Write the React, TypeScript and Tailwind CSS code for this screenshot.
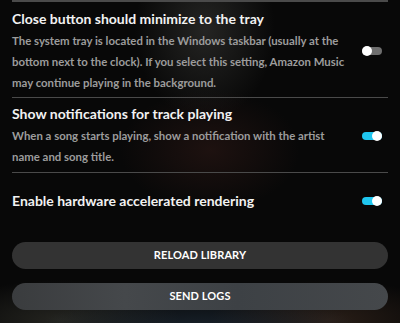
import React from "react";

function Toggle({ on }: { on: boolean }) {
  return (
    <div className="relative w-[20px] h-[10px] shrink-0">
      <div
        className={
          on
            ? "absolute left-0 right-0 top-[1px] h-[8px] rounded-full bg-[#1fc6ef]"
            : "absolute left-0 right-0 top-[1px] h-[8px] rounded-full bg-[#6e6e6e]"
        }
      />
      <div
        className={
          on
            ? "absolute right-0 top-0 w-[10px] h-[10px] rounded-full bg-white"
            : "absolute left-0 top-0 w-[10px] h-[10px] rounded-full bg-white"
        }
      />
    </div>
  );
}

function Row({ title, desc, on }: { title: string; desc?: string; on: boolean }) {
  return (
    <div className="flex items-center">
      <div className="flex-1">
        <div className="text-[14px] leading-[20px] font-bold text-[#f2f2f2]">{title}</div>
        {desc && (
          <div className="mt-[1px] text-[11.4px] leading-[21px] font-bold text-[#9c9c9c] w-[341px]">
            {desc}
          </div>
        )}
      </div>
      <div className="pr-[6px]">
        <Toggle on={on} />
      </div>
    </div>
  );
}

export default function App() {
  return (
    <div
      className="w-[400px] h-[323px] overflow-hidden bg-[#080808] px-3 bg-[radial-gradient(ellipse_70px_90px_at_205px_30px,rgba(90,90,85,0.35),transparent),radial-gradient(ellipse_90px_60px_at_210px_150px,rgba(70,35,30,0.35),transparent),radial-gradient(ellipse_160px_40px_at_200px_330px,rgba(40,60,80,0.5),transparent),radial-gradient(ellipse_120px_40px_at_60px_320px,rgba(70,70,60,0.45),transparent),radial-gradient(ellipse_120px_40px_at_330px_320px,rgba(80,55,40,0.45),transparent)]"
      style={{ fontFamily: 'Lato, "Noto Sans", sans-serif' }}
    >
      <div className="border-t-2 border-[#4a4a4a]" />
      <div className="pt-[7px] pb-[4px] border-b border-[#4a4a4a]">
        <Row
          title="Close button should minimize to the tray"
          desc="The system tray is located in the Windows taskbar (usually at the bottom next to the clock). If you select this setting, Amazon Music may continue playing in the background."
          on={false}
        />
      </div>
      <div className="pt-[6px] pb-[5px] border-b border-[#4a4a4a]">
        <Row
          title="Show notifications for track playing"
          desc="When a song starts playing, show a notification with the artist name and song title."
          on={true}
        />
      </div>
      <div className="pt-[18px]">
        <Row title="Enable hardware accelerated rendering" on={true} />
      </div>
      <div className="mt-[31px] flex flex-col gap-[14px]">
        <button className="h-[27px] w-full rounded-full bg-[#333333] text-[11px] font-bold text-white tracking-[0.1px]">
          RELOAD LIBRARY
        </button>
        <button className="h-[27px] w-full rounded-full bg-[linear-gradient(90deg,#3a3c3e,#45484b_30%,#3d4145_60%,#45484b)] text-[11px] font-bold text-white tracking-[0.1px]">
          SEND LOGS
        </button>
      </div>
    </div>
  );
}
